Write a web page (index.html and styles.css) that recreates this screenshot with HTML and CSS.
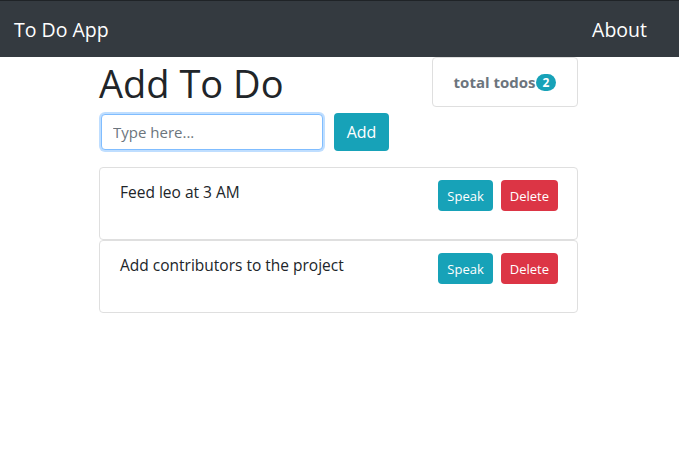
FILE: index.html
```html
<!DOCTYPE html>
<html>
<head>
<meta charset="utf-8">
<link rel="stylesheet" href="styles.css">
</head>
<body>
<nav class="navbar">
  <span class="brand">To Do App</span>
  <span class="nav-link">About</span>
</nav>
<main class="container">
  <div class="top-row">
    <h1 class="title">Add To Do</h1>
    <div class="total-card">
      <span class="total-text">total todos</span><span class="badge">2</span>
    </div>
  </div>
  <form class="add-form">
    <input class="text-input" type="text" placeholder="Type here...">
    <button type="button" class="btn btn-info btn-add">Add</button>
  </form>
  <div class="todo-list">
    <div class="todo-card">
      <span class="todo-text">Feed leo at 3 AM</span>
      <div class="actions">
        <button type="button" class="btn btn-sm btn-info">Speak</button>
        <button type="button" class="btn btn-sm btn-danger">Delete</button>
      </div>
    </div>
    <div class="todo-card">
      <span class="todo-text">Add contributors to the project</span>
      <div class="actions">
        <button type="button" class="btn btn-sm btn-info">Speak</button>
        <button type="button" class="btn btn-sm btn-danger">Delete</button>
      </div>
    </div>
  </div>
</main>
</body>
</html>
```
FILE: styles.css
```css
* { box-sizing: border-box; }
html, body { margin: 0; padding: 0; }
body {
  font-family: "Open Sans", "Noto Sans", sans-serif;
  font-size: 15px;
  color: #212529;
  background: #fff;
}
.navbar {
  height: 57px;
  background: #343a40;
  border-top: 1px solid #1f2327;
  display: flex;
  align-items: center;
  justify-content: space-between;
  padding: 0 32px 0 14px;
}
.brand { color: #fff; font-size: 19.5px; }
.nav-link { color: #fff; font-size: 19.5px; }
.container {
  width: 479px;
  margin: 0 0 0 99px;
}
.top-row {
  display: flex;
  justify-content: space-between;
  align-items: flex-start;
}
.title {
  margin: 2px 0 0 0;
  font-weight: 400;
  font-size: 38px;
  line-height: 48px;
}
.total-card {
  width: 146px;
  height: 50px;
  border: 1px solid #dfdfdf;
  border-radius: 4px;
  display: flex;
  align-items: center;
  justify-content: center;
  padding-left: 0;
}
.total-text { font-weight: 700; color: #6c757d; font-size: 15px; }
.badge {
  background: #17a2b8;
  color: #fff;
  font-size: 12px;
  font-weight: 700;
  border-radius: 10px;
  padding: 1px 7px;
  line-height: 15px;
}
.add-form {
  display: flex;
  gap: 11px;
  margin-top: 6px;
  align-items: center;
}
.text-input {
  width: 222px;
  height: 36px;
  margin-left: 2px;
  border: 1px solid #80bdff;
  border-radius: 4px;
  box-shadow: 0 0 0 2px rgba(0,123,255,.25);
  padding: 6px 11px;
  font-family: inherit;
  font-size: 15px;
  color: #495057;
  outline: none;
}
.text-input::placeholder { color: #6c757d; }
.btn {
  border: none;
  border-radius: 4px;
  color: #fff;
  font-family: inherit;
  font-size: 15px;
  height: 38px;
  padding: 0 12px;
}
.btn-add { width: 55px; font-size: 16px; padding: 0; }
.btn-info { background: #17a2b8; }
.btn-danger { background: #dc3545; }
.btn-sm { height: 31px; font-size: 13px; padding: 0 9px; }
.todo-list {
  margin-top: 16px;
  display: flex;
  flex-direction: column;
}
.todo-card {
  height: 73px;
  border: 1px solid #dfdfdf;
  border-radius: 4px;
  display: flex;
  justify-content: space-between;
  align-items: flex-start;
  padding: 12px 19px 0 20px;
}
.todo-text { font-size: 15.5px; margin-top: 1px; }
.actions { display: flex; gap: 8px; margin-top: 0; }
```
